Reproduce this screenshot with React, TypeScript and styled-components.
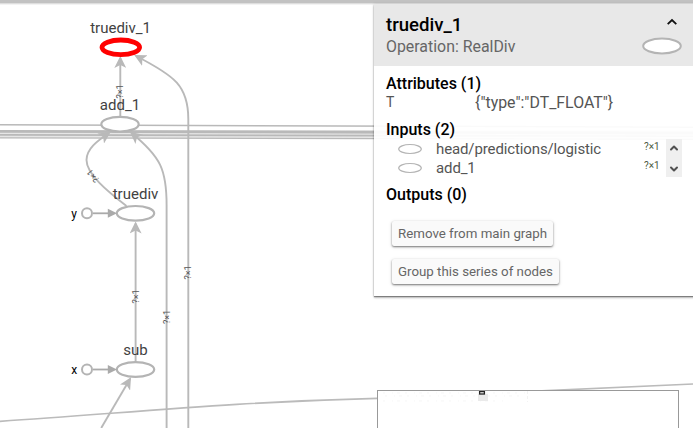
import React from "react";
import styled, { createGlobalStyle } from "styled-components";
import { ChevronDown, ChevronUp } from "lucide-react";

const GlobalStyle = createGlobalStyle`
  html, body { margin: 0; padding: 0; background: #fff; overflow: hidden; }
  * { box-sizing: border-box; }
`;

const Scene = styled.main`
  position: relative;
  width: 693px;
  height: 428px;
  overflow: hidden;
  background: #fff;
  font-family: Roboto, sans-serif;
`;

const TopShade = styled.div`
  position: absolute;
  inset: 0 0 auto 0;
  height: 5px;
  background: linear-gradient(#c2c2c2 0 3px, #dedede 3px 4px, #f3f3f3 4px 5px);
`;

const Graph = styled.svg`
  display: block;
  font-family: Roboto, sans-serif;
`;

const NodeLabel = styled.text`
  font-size: 15px;
  fill: #424242;
  text-anchor: middle;
`;

const ConstLabel = styled.text`
  font-size: 12px;
  fill: #000;
  text-anchor: middle;
`;

const EdgeLabel = styled.text`
  font-size: 9px;
  fill: #555;
  text-anchor: middle;
`;

const Panel = styled.aside`
  position: absolute;
  top: 4px;
  left: 374px;
  width: 325px;
  height: 292px;
  background: rgba(255, 255, 255, 0.93);
  box-shadow: 0 2px 2px rgba(0, 0, 0, 0.22), 0 1px 1px rgba(0, 0, 0, 0.35), 0 0 3px rgba(0, 0, 0, 0.12);
`;

const Header = styled.header`
  display: flex;
  justify-content: space-between;
  height: 62px;
  padding: 8px 17px 0 12px;
  background: #e8e8e8;
`;

const Title = styled.h1`
  margin: 0 0 -2px;
  font-size: 18.6px;
  line-height: 27px;
  font-weight: 500;
  color: #000;
`;

const Subtitle = styled.div`
  font-size: 15.9px;
  line-height: 19px;
  color: #666;
`;

const HeaderSide = styled.div`
  display: flex;
  flex-direction: column;
  align-items: flex-end;
  width: 42px;
  gap: 7px;
  padding-top: 2px;

  & > svg:first-child { margin-right: 2px; }
`;

const Body = styled.div`
  padding: 9px 12px 0 12px;
`;

const SectionTitle = styled.h2<{ $gap?: number }>`
  margin: ${(p) => p.$gap ?? 0}px 0 0;
  padding-bottom: 2px;
  font-size: 16px;
  line-height: 17px;
  font-weight: 500;
  color: #000;
`;

const Attribute = styled.div`
  display: grid;
  grid-template-columns: 89px 1fr;
  font-size: 15.9px;
  line-height: 18px;
  color: #555;
`;

const AttributeName = styled.span`
  font-size: 14px;
  line-height: 17px;
`;

const InputList = styled.div`
  display: flex;
  height: 38px;
  margin-top: -1px;
`;

const InputRows = styled.div`
  flex: 1;
`;

const InputRow = styled.div`
  display: grid;
  grid-template-columns: 50px 1fr 22px;
  height: 19px;
  font-size: 15px;
  line-height: 20px;
  letter-spacing: -0.12px;
  color: #555;
`;

const RowIcon = styled.svg`
  margin: 4px 0 0 11px;
`;

const Shape = styled.span`
  font-size: 10px;
  line-height: 15px;
  letter-spacing: 0;
  color: #4c5a40;
`;

const ScrollBar = styled.div`
  display: flex;
  flex-direction: column;
  align-items: center;
  justify-content: space-between;
  width: 16px;
  margin: 0 5px 0 0;
  padding: 3px 0 2px;
  background: #efefef;
`;

const Actions = styled.div`
  display: flex;
  flex-direction: column;
  align-items: flex-start;
  gap: 13px;
  padding: 16px 0 0 6px;
`;

const ActionButton = styled.button`
  height: 25px;
  padding: 1px 6px 0;
  border: 0;
  border-radius: 2px;
  background: #fafafa;
  box-shadow: 0 1px 2px rgba(0, 0, 0, 0.48), 0 1px 4px rgba(0, 0, 0, 0.12);
  font: 400 13.3px/24px Roboto, sans-serif;
  color: #666;
  white-space: nowrap;
`;

const MiniMap = styled.div`
  position: absolute;
  left: 377px;
  top: 390px;
  width: 302px;
  height: 50px;
  border: 1px solid #999;
  background: #fff;
`;

const edgeBundle = [
  { from: 124.8, to: 127.2, width: 1.6 },
  { from: 131.3, to: 133, width: 2.8 },
  { from: 134.9, to: 136.2, width: 1.6 },
  { from: 137.9, to: 139.2, width: 1.4 },
];

function OperationNode({ x, y, label, labelX = x }: { x: number; y: number; label: string; labelX?: number }) {
  return (
    <g>
      <ellipse cx={x} cy={y} rx={18.7} ry={7.3} fill="#fff" stroke="#b4b4b4" strokeWidth={2.2} />
      <NodeLabel x={labelX} y={y - 14.5}>{label}</NodeLabel>
    </g>
  );
}

function ConstantInput({ y, label }: { y: number; label: string }) {
  return (
    <g>
      <path d={`M93 ${y}H108`} stroke="#aaa" strokeWidth={1.8} />
      <path d={`M107.8 ${y - 4.5}L117 ${y}L107.8 ${y + 4.5}Z`} fill="#aaa" />
      <circle cx={87} cy={y} r={5} fill="#fff" stroke="#b4b4b4" strokeWidth={2} />
      <ConstLabel x={74.2} y={y + 4.3}>{label}</ConstLabel>
    </g>
  );
}

function FlowGraph() {
  return (
    <Graph width="693" height="428" viewBox="0 0 693 428">
      <defs>
        <marker id="flow" viewBox="0 0 12 12" refX="10" refY="6" markerWidth="12" markerHeight="12" markerUnits="userSpaceOnUse" orient="auto">
          <path d="M0 0L12 6L0 12L3 6Z" fill="#b9b9b9" />
        </marker>
      </defs>
      <rect x="0" y="130" width="693" height="8" fill="#e6e6e6" />
      {edgeBundle.map((edge) => (
        <path key={edge.from} d={`M0 ${edge.from}L693 ${edge.to}`} stroke="#b9b9b9" strokeWidth={edge.width} />
      ))}
      <path d="M0 421.3C130 412.8 230 402 377 398.3C500 393 600 389 693 384" fill="none" stroke="#bbb" strokeWidth={1.7} />
      <g fill="none" stroke="#b9b9b9" strokeWidth={1.9} markerEnd="url(#flow)">
        <path d="M120.3 118V58" />
        <path d="M188.3 428V119C188.3 86 175 76 136 56" />
        <path d="M126.5 206C107 191 86.5 174 86.5 160C86.5 149 97 141 109 133" />
        <path d="M166.6 428V205C166.6 170 161 157 131.5 133" />
        <path d="M135.6 362V223.5" />
        <path d="M101.2 428L130 379" />
      </g>
      <OperationNode x={120} y={124.2} label="add_1" />
      <OperationNode x={135.5} y={213.3} label="truediv" />
      <OperationNode x={135.5} y={369.5} label="sub" />
      <ellipse cx={120.8} cy={47.3} rx={18.8} ry={7.3} fill="#fff" stroke="#f00" strokeWidth={4.8} />
      <NodeLabel x={120.6} y={33}>truediv_1</NodeLabel>
      <ConstantInput y={213.3} label="y" />
      <ConstantInput y={369.5} label="x" />
      <EdgeLabel transform="translate(123.3 91.5) rotate(-90)">?×1</EdgeLabel>
      <EdgeLabel transform="translate(95.3 174) rotate(-128)">?×1</EdgeLabel>
      <EdgeLabel transform="translate(138.8 296.5) rotate(-90)">?×1</EdgeLabel>
      <EdgeLabel transform="translate(169.8 317) rotate(-90)">?×1</EdgeLabel>
      <EdgeLabel transform="translate(191.3 272.5) rotate(-90)">?×1</EdgeLabel>
    </Graph>
  );
}

const inputs = ["head/predictions/logistic", "add_1"];

export default function App() {
  return (
    <>
      <GlobalStyle />
      <Scene>
        <FlowGraph />
        <TopShade />
        <Panel>
          <Header>
            <div>
              <Title>truediv_1</Title>
              <Subtitle>Operation: RealDiv</Subtitle>
            </div>
            <HeaderSide>
              <svg width="16" height="16" viewBox="0 0 16 16" fill="none" stroke="#111" strokeWidth="1.8">
                <path d="M3.7 10.2L8 6L12.3 10.2" />
              </svg>
              <svg width="42" height="18" viewBox="0 0 42 18">
                <ellipse cx="22" cy="9" rx="18.8" ry="7.4" fill="#fff" stroke="#b4b4b4" strokeWidth="2" />
              </svg>
            </HeaderSide>
          </Header>
          <Body>
            <SectionTitle>Attributes (1)</SectionTitle>
            <Attribute>
              <AttributeName>T</AttributeName>
              <span>{'{"type":"DT_FLOAT"}'}</span>
            </Attribute>
            <SectionTitle $gap={9}>Inputs (2)</SectionTitle>
            <InputList>
              <InputRows>
                {inputs.map((name) => (
                  <InputRow key={name}>
                    <RowIcon width="26" height="12" viewBox="0 0 26 12">
                      <ellipse cx="13" cy="6" rx="11.3" ry="4.5" fill="#fff" stroke="#b4b4b4" strokeWidth="1.2" />
                    </RowIcon>
                    <span>{name}</span>
                    <Shape>?×1</Shape>
                  </InputRow>
                ))}
              </InputRows>
              <ScrollBar>
                <ChevronUp size={12} strokeWidth={4} color="#505050" />
                <ChevronDown size={12} strokeWidth={4} color="#505050" />
              </ScrollBar>
            </InputList>
            <SectionTitle $gap={9}>Outputs (0)</SectionTitle>
            <Actions>
              <ActionButton>Remove from main graph</ActionButton>
              <ActionButton>Group this series of nodes</ActionButton>
            </Actions>
          </Body>
        </Panel>
        <MiniMap>
          <svg width="300" height="48" viewBox="0 0 300 48" fill="none">
            <path d="M5 2H148M7 5H141M5 10H126" stroke="#f2f2f2" strokeDasharray="2 7 1 4 3 5" strokeWidth=".7" />
            <path d="M149.5 0V11" stroke="#f3f3f3" strokeDasharray="3 2" />
            <rect x="100" y="3" width="10" height="7" fill="#eaeaea" />
            <rect x="101.6" y=".6" width="4.8" height="2.4" fill="#fff" stroke="#222" strokeWidth="1.3" />
          </svg>
        </MiniMap>
      </Scene>
    </>
  );
}
